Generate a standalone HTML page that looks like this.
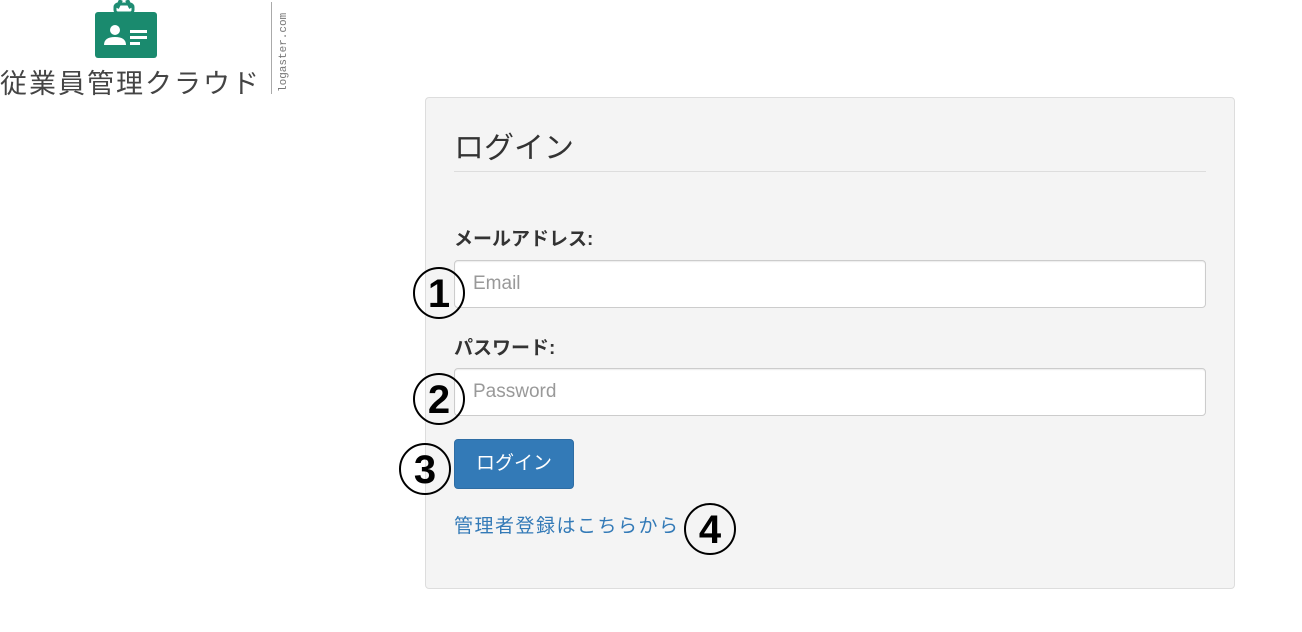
<!DOCTYPE html>
<html><head><meta charset="utf-8"><style>
body{margin:0;width:1302px;height:632px;background:#fff;font-family:"Liberation Sans","Noto Sans CJK JP",sans-serif;position:relative;overflow:hidden}
.abs{position:absolute}
.panel{left:425px;top:97px;width:810px;height:492px;background:#f4f4f4;border:1px solid #ddd;border-radius:4px;box-sizing:border-box}
.h{left:454px;top:123px;font-size:30px;color:#333}
.hr{left:454px;top:171px;width:752px;height:1px;background:#ddd}
.lbl{font-size:19px;font-weight:bold;color:#333;left:454px}
.inp{left:454px;width:752px;height:48px;background:#fff;border:1px solid #ccc;border-radius:4px;box-sizing:border-box;font-size:19px;color:#999;padding:12px 18px;box-shadow:inset 0 1px 1px rgba(0,0,0,.075)}
.btn{left:454px;top:439px;width:120px;height:50px;background:#337ab7;border:1px solid #2e6da4;border-radius:4px;box-sizing:border-box;color:#fff;font-size:19px;text-align:center;line-height:48px}
.link{left:454px;top:511px;color:#337ab7;font-size:19px;letter-spacing:1.5px}
.c{width:48px;height:48px;border:2px solid #000;border-radius:50%;box-sizing:content-box;font-size:40px;font-weight:bold;text-align:center;line-height:50px;color:#000;background:transparent}
</style></head><body>
<svg class="abs" style="left:93px;top:0" width="66" height="58" viewBox="0 0 66 58">
<path d="M24 8 L28 0 M38 8 L34 0" stroke="#1e8c72" stroke-width="4" fill="none"/>
<rect x="22" y="4" width="18" height="9" rx="3" fill="none" stroke="#1e8c72" stroke-width="3"/>
<rect x="2" y="12" width="62" height="46" rx="3" fill="#1a8a6e"/>
<circle cx="22" cy="30" r="5" fill="#fff"/>
<path d="M11 45 Q11 37 22 37 Q33 37 33 45 Z" fill="#fff"/>
<rect x="37" y="30" width="17" height="3" fill="#fff"/><rect x="37" y="36" width="17" height="3" fill="#fff"/><rect x="37" y="42" width="10" height="3" fill="#fff"/>
</svg>
<div class="abs" style="left:0;top:62px;font-size:27px;color:#444;letter-spacing:2px">従業員管理クラウド</div>
<div class="abs" style="left:271px;top:2px;width:1px;height:92px;background:#aaa"></div>
<div class="abs" style="left:278px;top:92px;transform:rotate(-90deg);transform-origin:0 0;font-family:'Liberation Mono',monospace;font-size:11px;color:#777;white-space:nowrap">logaster.com</div>
<div class="abs panel"></div>
<div class="abs h">ログイン</div>
<div class="abs hr"></div>
<div class="abs lbl" style="top:224px">メールアドレス:</div>
<div class="abs inp" style="top:260px">Email</div>
<div class="abs lbl" style="top:333px">パスワード:</div>
<div class="abs inp" style="top:368px">Password</div>
<div class="abs btn">ログイン</div>
<div class="abs link">管理者登録はこちらから</div>
<div class="abs c" style="left:413px;top:267px">1</div>
<div class="abs c" style="left:413px;top:373px">2</div>
<div class="abs c" style="left:399px;top:443px">3</div>
<div class="abs c" style="left:684px;top:503px">4</div>
</body></html>
